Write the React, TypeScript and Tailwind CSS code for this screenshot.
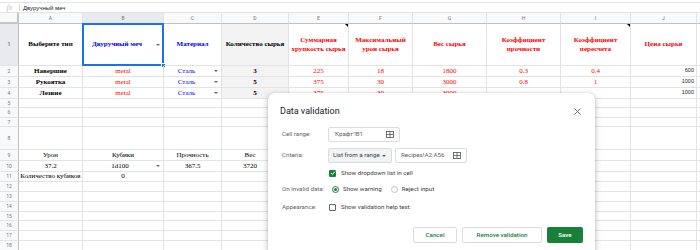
import React from "react";

const W = {
  h: "w-[19px]",
  A: "w-[64px]",
  B: "w-[81px]",
  C: "w-[58px]",
  D: "w-[67px]",
  E: "w-[60px]",
  F: "w-[64px]",
  G: "w-[74px]",
  H: "w-[74px]",
  I: "w-[70px]",
  J: "w-[66px]",
};

type CellProps = { w: string; className?: string; children?: React.ReactNode };

function Cell({ w, className = "", children }: CellProps) {
  return (
    <div
      className={`${w} shrink-0 h-full border-r border-b border-[#e2e3e3] flex items-center justify-center relative whitespace-nowrap ${className}`}
    >
      {children}
    </div>
  );
}

function RowHead({ n, sel = false }: { n: number; sel?: boolean }) {
  return (
    <div
      className={`w-[19px] shrink-0 h-full border-r border-r-[#c0c0c0] border-b border-b-[#e2e3e3] flex items-center justify-center text-[5px] text-[#777] font-['Roboto',sans-serif] ${
        sel ? "bg-[#e8eaed]" : "bg-[#f8f9fa]"
      }`}
    >
      {n}
    </div>
  );
}

function Arrow() {
  return (
    <span className="absolute right-[3px] top-1/2 -translate-y-1/2 w-0 h-0 border-x-[2px] border-t-[2px] border-x-transparent border-t-[#666]" />
  );
}

function Note() {
  return (
    <span className="absolute right-0 top-0 w-0 h-0 border-t-[3px] border-l-[3px] border-t-black border-l-transparent" />
  );
}

function Rest() {
  return <div className="flex-1 h-full border-b border-[#e2e3e3]" />;
}

function EmptyRow({ n, h }: { n: number; h: string }) {
  return (
    <div className={`flex ${h}`}>
      <RowHead n={n} />
      <Cell w={W.A} />
      <Cell w={W.B} />
      <Cell w={W.C} />
      <Cell w={W.D} />
      <Cell w={W.E} />
      <Cell w={W.F} />
      <Cell w={W.G} />
      <Cell w={W.H} />
      <Cell w={W.I} />
      <Cell w={W.J} />
      <Rest />
    </div>
  );
}

function ColHead({ w, l, sel = false }: { w: string; l: string; sel?: boolean }) {
  return (
    <div
      className={`${w} shrink-0 h-full border-r border-b border-r-[#e2e3e3] border-b-[#c0c0c0] flex items-center justify-center text-[5px] text-[#777] font-['Roboto',sans-serif] ${
        sel ? "bg-[#e8eaed]" : "bg-[#f8f9fa]"
      }`}
    >
      {l}
    </div>
  );
}

function GridIcon() {
  return (
    <svg width="8" height="7" viewBox="0 0 8 7" fill="none" stroke="#5f6368" strokeWidth="0.9">
      <rect x="0.5" y="0.5" width="7" height="6" />
      <line x1="0.5" y1="3.5" x2="7.5" y2="3.5" />
      <line x1="4" y1="0.5" x2="4" y2="6.5" />
    </svg>
  );
}

const red = "text-[#ff0000]";
const blue = "text-[#0000ff]";

export default function App() {
  return (
    <div className="w-[700px] h-[250px] overflow-hidden relative bg-white font-['Liberation_Serif',serif] text-[7px] text-black leading-none">
      {/* formula bar */}
      <div className="h-[2px]" />
      <div className="h-[11px] flex items-center border-t border-b border-[#e2e3e3]">
        <span className="w-[19px] text-center italic text-[#bbb] text-[8px] font-['Liberation_Serif',serif]">fx</span>
        <span className="w-px h-[7px] bg-[#dadce0]" />
        <span className="ml-[3px] text-[6px] font-['Liberation_Sans',sans-serif] text-[#222]">Двуручный меч</span>
      </div>

      {/* column header */}
      <div className="flex h-[11px]">
        <div className="w-[19px] shrink-0 h-full bg-[#f8f9fa] border-r-2 border-b-2 border-[#c4c7c5]" />
        <ColHead w={W.A} l="A" />
        <ColHead w={W.B} l="B" sel />
        <ColHead w={W.C} l="C" />
        <ColHead w={W.D} l="D" />
        <ColHead w={W.E} l="E" />
        <ColHead w={W.F} l="F" />
        <ColHead w={W.G} l="G" />
        <ColHead w={W.H} l="H" />
        <ColHead w={W.I} l="I" />
        <ColHead w={W.J} l="J" />
        <div className="flex-1 h-full bg-[#f8f9fa] border-b border-[#c0c0c0]" />
      </div>

      {/* row 1 */}
      <div className="flex h-[42px] font-bold">
        <RowHead n={1} sel />
        <Cell w={W.A}>Выберите тип</Cell>
        <Cell w={W.B} className={`${blue} pr-[12px]`}>
          Двуручный меч
          <Arrow />
          <span className="absolute -left-px -top-px -right-px -bottom-px border-2 border-[#1a73e8]" />
          <span className="absolute -right-[3px] -bottom-[3px] w-[5px] h-[5px] bg-[#1a73e8] border border-white" />
        </Cell>
        <Cell w={W.C} className={blue}>Материал</Cell>
        <Cell w={W.D} className="bg-[#f3f3f3]">Количество сырья</Cell>
        <Cell w={W.E} className={`${red} text-center leading-[8.5px]`}>
          Суммарная
          <br />
          хрупкость сырья
          <Note />
        </Cell>
        <Cell w={W.F} className={`${red} text-center leading-[8.5px]`}>
          Максимальный
          <br />
          урон сырья
        </Cell>
        <Cell w={W.G} className={red}>Вес сырья</Cell>
        <Cell w={W.H} className={`${red} text-center leading-[8.5px]`}>
          Коэффициент
          <br />
          прочности
        </Cell>
        <Cell w={W.I} className={`${red} text-center leading-[8.5px]`}>
          Коэффициент
          <br />
          пересчета
          <Note />
        </Cell>
        <Cell w={W.J} className={red}>Цена сырья</Cell>
        <Rest />
      </div>

      {/* rows 2-4 */}
      {[
        { n: 2, a: "Навершие", d: "3", e: "225", f: "18", g: "1800", h: "0.3", i: "0.4", j: "600" },
        { n: 3, a: "Рукоятка", d: "5", e: "375", f: "30", g: "3000", h: "0.8", i: "1", j: "1000" },
        { n: 4, a: "Лезвие", d: "5", e: "375", f: "30", g: "3000", h: "", i: "", j: "1000" },
      ].map((r) => (
        <div key={r.n} className="flex h-[11px]">
          <RowHead n={r.n} />
          <Cell w={W.A} className="font-bold">{r.a}</Cell>
          <Cell w={W.B} className={red}>metal</Cell>
          <Cell w={W.C} className={`${blue} pr-[12px]`}>
            Сталь
            <Arrow />
          </Cell>
          <Cell w={W.D} className="bg-[#f3f3f3] font-bold">{r.d}</Cell>
          <Cell w={W.E} className={red}>{r.e}</Cell>
          <Cell w={W.F} className={red}>{r.f}</Cell>
          <Cell w={W.G} className={red}>{r.g}</Cell>
          <Cell w={W.H} className={red}>{r.h}</Cell>
          <Cell w={W.I} className={red}>{r.i}</Cell>
          <Cell w={W.J} className="justify-end pr-[2px] font-['Liberation_Sans',sans-serif] text-[5.5px] text-[#222]">
            {r.j}
          </Cell>
          <Rest />
        </div>
      ))}

      <EmptyRow n={5} h="h-[9px]" />
      <EmptyRow n={6} h="h-[10px]" />
      <EmptyRow n={7} h="h-[9px]" />
      <EmptyRow n={8} h="h-[23px]" />

      {/* row 9 */}
      <div className="flex h-[11px]">
        <RowHead n={9} />
        <Cell w={W.A}>Урон</Cell>
        <Cell w={W.B}>Кубики</Cell>
        <Cell w={W.C}>Прочность</Cell>
        <Cell w={W.D} className="pr-[10px]">Вес</Cell>
        <Cell w={W.E} />
        <Cell w={W.F} />
        <Cell w={W.G} />
        <Cell w={W.H} />
        <Cell w={W.I} />
        <Cell w={W.J} />
        <Rest />
      </div>
      {/* row 10 */}
      <div className="flex h-[11px]">
        <RowHead n={10} />
        <Cell w={W.A}>37.2</Cell>
        <Cell w={W.B} className="pr-[6px]">
          1d100
          <Arrow />
        </Cell>
        <Cell w={W.C}>367.5</Cell>
        <Cell w={W.D} className="pr-[10px]">3720</Cell>
        <Cell w={W.E} />
        <Cell w={W.F} />
        <Cell w={W.G} />
        <Cell w={W.H} />
        <Cell w={W.I} />
        <Cell w={W.J} />
        <Rest />
      </div>
      {/* row 11 */}
      <div className="flex h-[10px]">
        <RowHead n={11} />
        <Cell w={W.A}>Количество кубиков</Cell>
        <Cell w={W.B}>0</Cell>
        <Cell w={W.C} />
        <Cell w={W.D} />
        <Cell w={W.E} />
        <Cell w={W.F} />
        <Cell w={W.G} />
        <Cell w={W.H} />
        <Cell w={W.I} />
        <Cell w={W.J} />
        <Rest />
      </div>
      <EmptyRow n={12} h="h-[10px]" />
      <EmptyRow n={13} h="h-[10px]" />
      <EmptyRow n={14} h="h-[10px]" />
      <EmptyRow n={15} h="h-[9px]" />
      <EmptyRow n={16} h="h-[10px]" />
      <EmptyRow n={17} h="h-[10px]" />
      <EmptyRow n={18} h="h-[10px]" />

      {/* Data validation dialog */}
      <div className="absolute left-[268px] top-[93px] w-[327px] h-[180px] bg-white rounded-[6px] shadow-[0_2px_6px_rgba(0,0,0,0.28),0_0_1px_rgba(0,0,0,0.25)] font-['Roboto',sans-serif] text-[#3c4043] px-[14px] pt-[11px] leading-none whitespace-nowrap">
        <div className="flex items-center justify-between h-[14px]">
          <div className="-ml-[2px] text-[9px] text-[#202124]">Data validation</div>
          <svg width="7" height="7" viewBox="0 0 7 7" stroke="#5f6368" strokeWidth="0.9">
            <line x1="0.5" y1="0.5" x2="6.5" y2="6.5" />
            <line x1="6.5" y1="0.5" x2="0.5" y2="6.5" />
          </svg>
        </div>

        <div className="flex items-center mt-[9px] h-[15px]">
          <div className="w-[46px] text-[6.2px] text-[#5f6368]">Cell range:</div>
          <div className="w-[72px] h-[15px] border border-[#dadce0] rounded-[2px] flex items-center justify-between pl-[5px] pr-[5px]">
            <span className="text-[6.2px] text-[#5f6368]">'Крафт'!B1</span>
            <GridIcon />
          </div>
        </div>

        <div className="flex items-center mt-[6px] h-[15px]">
          <div className="w-[46px] text-[6.2px] text-[#5f6368]">Criteria:</div>
          <div className="w-[64px] h-[15px] border border-[#dadce0] bg-[#f1f3f4] rounded-[2px] flex items-center justify-between pl-[4px] pr-[5px]">
            <span className="text-[6.2px] text-[#3c4043]">List from a range</span>
            <span className="w-0 h-0 border-x-[2px] border-t-[2px] border-x-transparent border-t-[#5f6368]" />
          </div>
          <div className="ml-[3px] w-[72px] h-[15px] border border-[#dadce0] rounded-[2px] flex items-center justify-between pl-[5px] pr-[5px]">
            <span className="text-[6.2px] text-[#5f6368]">Recipes!A2:A56</span>
            <GridIcon />
          </div>
        </div>

        <div className="flex items-center mt-[4px] h-[12px] pl-[47px]">
          <span className="w-[7px] h-[7px] rounded-[1px] bg-[#188038] flex items-center justify-center">
            <svg width="6" height="6" viewBox="0 0 6 6" fill="none" stroke="white" strokeWidth="1">
              <path d="M1 3.1 L2.4 4.4 L5 1.6" />
            </svg>
          </span>
          <span className="ml-[5px] text-[6.2px] text-[#3c4043]">Show dropdown list in cell</span>
        </div>

        <div className="flex items-center mt-[4px] h-[12px]">
          <div className="w-[50px] text-[6.2px] text-[#5f6368]">On invalid data:</div>
          <span className="w-[7px] h-[7px] rounded-full border border-[#188038] flex items-center justify-center">
            <span className="w-[3px] h-[3px] rounded-full bg-[#188038]" />
          </span>
          <span className="ml-[4px] text-[6.2px] text-[#3c4043]">Show warning</span>
          <span className="ml-[9px] w-[7px] h-[7px] rounded-full border border-[#bdc1c6]" />
          <span className="ml-[4px] text-[6.2px] text-[#3c4043]">Reject input</span>
        </div>

        <div className="flex items-center mt-[6px] h-[12px]">
          <div className="w-[47px] text-[6.2px] text-[#5f6368]">Appearance:</div>
          <span className="w-[7px] h-[7px] rounded-[1px] border border-[#5f6368]" />
          <span className="ml-[5px] text-[6.2px] text-[#3c4043]">Show validation help text:</span>
        </div>

        <div className="flex items-center justify-end mt-[14px] -mr-[2px] gap-[5px]">
          <div className="w-[44px] h-[16px] border border-[#dadce0] rounded-[2px] flex items-center justify-center text-[6.2px] font-medium text-[#188038]">
            Cancel
          </div>
          <div className="w-[80px] h-[16px] border border-[#dadce0] rounded-[2px] flex items-center justify-center text-[6.2px] font-medium text-[#188038]">
            Remove validation
          </div>
          <div className="w-[36px] h-[16px] bg-[#188038] rounded-[2px] flex items-center justify-center text-[6.2px] font-medium text-white">
            Save
          </div>
        </div>
      </div>
    </div>
  );
}
